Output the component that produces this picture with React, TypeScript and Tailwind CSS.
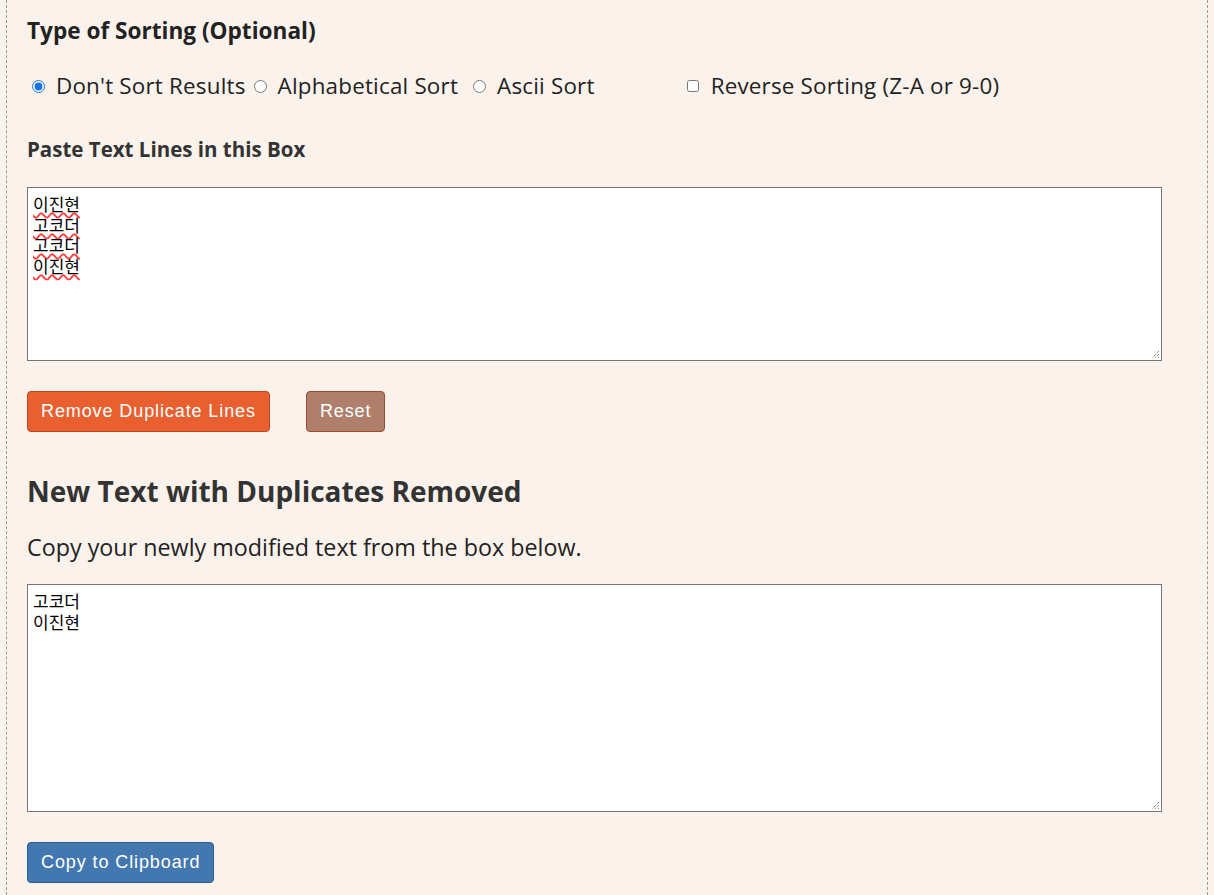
import React from 'react'

const body = "font-['Open_Sans','Noto_Sans',sans-serif]"
const korean = "font-['Noto_Sans_CJK_KR','Noto_Sans_CJK_SC',sans-serif]"
const btn =
	"rounded-[4px] border px-[13px] h-[41px] font-['Liberation_Sans',Arial,sans-serif] text-[18px] tracking-[0.9px] text-white"

const INPUT_LINES = ['이진현', '고코더', '고코더', '이진현']

const Grip = () => (
	<svg className="absolute right-[1px] bottom-[1px]" width="9" height="9" viewBox="0 0 9 9">
		<path d="M8 1 L1 8 M8 4 L4 8 M8 7 L7 8" stroke="#555" strokeWidth="1" strokeDasharray="1 1" />
	</svg>
)

export default function App() {
	return (
		<div className={`min-h-[895px] bg-[#fbf2ec] px-[6px] ${body}`}>
			<div className="min-h-[895px] border-x border-dashed border-[#9a9a9a] pl-[20px] pt-[17px] pb-[12px] text-[#222]">
				<h3 className="text-[22.6px] leading-[28px] font-bold text-[#222]">Type of Sorting (Optional)</h3>

				<div className="mt-[26px] flex h-[30px] items-center text-[22.4px] leading-[30px] tracking-[0.2px]">
					<label className="flex items-center">
						<input type="radio" name="sort" defaultChecked className="ml-[5px] mr-[11px] h-[13px] w-[13px] accent-[#1a73e8]" />
						Don&apos;t Sort Results
					</label>
					<label className="ml-[8px] flex items-center">
						<input type="radio" name="sort" className="mr-[11px] h-[13px] w-[13px]" />
						Alphabetical Sort
					</label>
					<label className="ml-[15px] flex items-center">
						<input type="radio" name="sort" className="mr-[11px] h-[13px] w-[13px]" />
						Ascii Sort
					</label>
					<label className="ml-[92px] flex items-center">
						<input type="checkbox" className="mr-[12px] h-[12px] w-[12px]" />
						Reverse Sorting (Z-A or 9-0)
					</label>
				</div>

				<h3 className="mt-[34px] text-[20.5px] leading-[28px] font-bold text-[#333]">Paste Text Lines in this Box</h3>

				<div className="relative mt-[24px] h-[174px] w-[1135px] border border-[#767676] bg-white px-[5px] pt-[6px]">
					<div className={`${korean} text-[17px] leading-[20.5px] text-black`}>
						{INPUT_LINES.map((line, i) => (
							<div key={i}>
								<span className="underline decoration-[#ff4040] decoration-wavy decoration-[1.5px] underline-offset-[1px]">
									{line}
								</span>
							</div>
						))}
					</div>
					<Grip />
				</div>

				<div className="mt-[30px] flex gap-[36px]">
					<button className={`${btn} border-[#c2461d] bg-[#e86030]`}>Remove Duplicate Lines</button>
					<button className={`${btn} border-[#a24a30] bg-[#b07f6b]`}>Reset</button>
				</div>

				<h2 className="mt-[41px] text-[28px] leading-[36px] font-bold text-[#333]">
					New Text with Duplicates Removed
				</h2>

				<p className="mt-[23px] text-[23.3px] leading-[30px] text-[#222]">
					Copy your newly modified text from the box below.
				</p>

				<div className="relative mt-[22px] h-[228px] w-[1135px] border border-[#767676] bg-white px-[5px] pt-[6px]">
					<div className={`${korean} text-[17px] leading-[20.5px] text-black`}>
						<div>고코더</div>
						<div>이진현</div>
					</div>
					<Grip />
				</div>

				<button className={`${btn} mt-[30px] border-[#2c5d92] bg-[#4377b0]`}>Copy to Clipboard</button>
			</div>
		</div>
	)
}
